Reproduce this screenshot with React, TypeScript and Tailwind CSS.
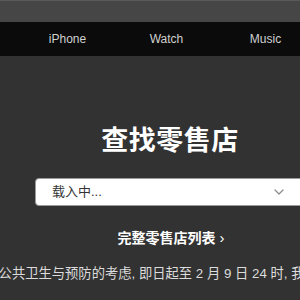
import React from "react";

const font = {
  fontFamily:
    '"Liberation Sans", "Noto Sans CJK SC", Arial, sans-serif',
};

const navItems = ["iPhone", "Watch", "Music"];

export default function App() {
  return (
    <div
      className="w-[300px] h-[300px] overflow-hidden bg-[#323232]"
      style={font}
    >
      <div className="h-[22px] bg-[#464646] border-t border-[#5a5a5a]" />
      <nav className="h-[34px] bg-[#0b0b0b] flex items-center pl-[18px]">
        {navItems.map((item) => (
          <div
            key={item}
            className="w-[99px] shrink-0 text-center text-[12px] text-[#d0d0d0]"
          >
            {item}
          </div>
        ))}
      </nav>
      <div className="w-[340px] flex flex-col items-center">
        <h1 className="mt-[68px] text-[27px] leading-[34px] font-bold text-white tracking-[0.5px]">
          查找零售店
        </h1>
        <div className="mt-[20px] w-[270px] h-[28px] shrink-0 bg-white rounded-[4px] border border-[#9a9a9a] flex items-center justify-between pl-[16px] pr-[20px]">
          <span className="text-[13px] text-[#333]">载入中...</span>
          <svg width="10" height="6" viewBox="0 0 10 6" fill="none">
            <path
              d="M1 1l4 4 4-4"
              stroke="#8a8a8a"
              strokeWidth="1.2"
              strokeLinecap="round"
              strokeLinejoin="round"
            />
          </svg>
        </div>
        <a className="mt-[23px] ml-[2px] text-[14px] leading-[18px] font-bold text-white flex items-center gap-[4px]">
          完整零售店列表
          <span className="text-[15px] font-normal">›</span>
        </a>
      </div>
      <p className="mt-[18px] ml-[-28px] whitespace-nowrap text-[13.3px] leading-[18px] text-[#dcdcdc]">
        近期公共卫生与预防的考虑, 即日起至 2 月 9 日 24 时, 我们将暂时关闭中国大陆的所有零售店。
      </p>
    </div>
  );
}
